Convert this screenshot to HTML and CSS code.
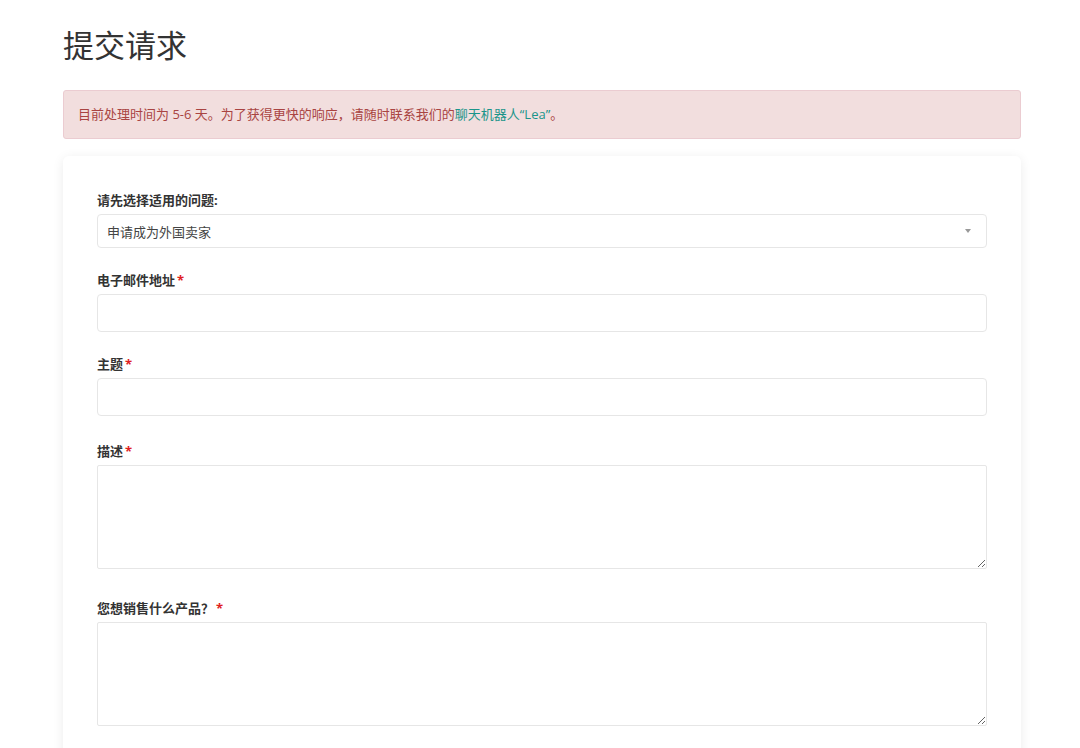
FILE: index.html
```html
<!DOCTYPE html>
<html lang="zh">
<head>
    <meta charset="UTF-8">
    <title>提交请求</title>
    <link rel="stylesheet" href="styles.css">
</head>
<body>
    <div class="page">
        <h1>提交请求</h1>

        <div class="alert">
            目前处理时间为 5-6 天。为了获得更快的响应，请随时联系我们的<a href="#">聊天机器人“Lea”</a>。
        </div>

        <form class="card">
            <div class="field field-first">
                <label>请先选择适用的问题:</label>
                <div class="select">
                    <span>申请成为外国卖家</span>
                    <span class="caret"></span>
                </div>
            </div>

            <div class="field">
                <label>电子邮件地址<span class="req">*</span></label>
                <input type="text" class="input">
            </div>

            <div class="field">
                <label>主题<span class="req">*</span></label>
                <input type="text" class="input">
            </div>

            <div class="field field-wide">
                <label>描述<span class="req">*</span></label>
                <textarea class="textarea"></textarea>
            </div>

            <div class="field field-wider">
                <label>您想销售什么产品？<span class="req">*</span></label>
                <textarea class="textarea"></textarea>
            </div>
        </form>
    </div>
</body>
</html>
```

FILE: styles.css
```css
body {
    margin: 0;
    background: #fff;
    font-family: "Open Sans", "Noto Sans CJK SC", sans-serif;
    color: #333;
}
.page {
    width: 958px;
    margin: 0 auto 0 63px;
}
h1 {
    font-size: 31px;
    font-weight: 400;
    color: #333;
    margin: 0;
    padding-top: 24px;
    line-height: 42px;
    height: 66px;
}
.alert {
    background: #f2dede;
    border: 1px solid #ebccd1;
    border-radius: 3px;
    color: #a94442;
    font-size: 13px;
    line-height: 20px;
    padding: 13px 14px 14px;
}
.alert a {
    color: #1b958a;
    text-decoration: none;
}
.card {
    margin-top: 17px;
    background: #fff;
    border-radius: 6px;
    box-shadow: 0 2px 12px rgba(0, 0, 0, 0.08);
    padding: 34px 34px 30px;
    height: 600px;
}
.field {
    margin-top: 22px;
}
.field-first {
    margin-top: 0;
}
.field-wide {
    margin-top: 25px;
}
.field-wider {
    margin-top: 29px;
}
.field label {
    display: block;
    font-size: 13px;
    font-weight: 700;
    line-height: 20px;
    margin-bottom: 4px;
    color: #333;
}
.req {
    color: #e02020;
    margin-left: 2px;
}
.select {
    display: flex;
    align-items: center;
    justify-content: space-between;
    height: 34px;
    box-sizing: border-box;
    border: 1px solid #e6e6e6;
    border-radius: 4px;
    padding: 0 15px 0 9px;
    font-size: 13px;
    color: #444;
}
.caret {
    width: 0;
    height: 0;
    border-left: 3px solid transparent;
    border-right: 3px solid transparent;
    border-top: 4px solid #999;
}
.input {
    display: block;
    width: 100%;
    height: 38px;
    box-sizing: border-box;
    border: 1px solid #e6e6e6;
    border-radius: 4px;
    font: inherit;
}
.textarea {
    display: block;
    width: 100%;
    height: 104px;
    box-sizing: border-box;
    border: 1px solid #e6e6e6;
    border-radius: 2px;
    font: inherit;
    resize: vertical;
}
```
